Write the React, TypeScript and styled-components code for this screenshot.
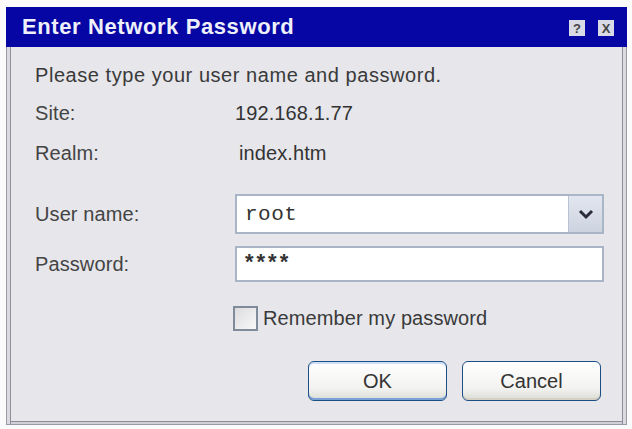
import React from 'react'
import styled, { createGlobalStyle } from 'styled-components'

const GlobalStyle = createGlobalStyle`
  html, body {
    margin: 0;
    padding: 0;
    background: #fbfbfb;
  }
  body {
    font-family: 'Liberation Sans', Arial, sans-serif;
    color: #3a3a3a;
  }
`

const Frame = styled.div`
  margin: 7px 5px 0 6px;
  width: 621px;
  display: flex;
  flex-direction: column;
`

const TitleBar = styled.div`
  height: 40px;
  background: #0606a4;
  display: flex;
  align-items: center;
  justify-content: space-between;
  padding: 0 13px 0 16px;
`

const Title = styled.span`
  color: #eef0fa;
  font-weight: bold;
  font-size: 22px;
  letter-spacing: 0.6px;
`

const Caption = styled.div`
  display: flex;
  gap: 13px;
  padding-top: 2px;
`

const CaptionButton = styled.span`
  width: 16px;
  height: 16px;
  background: #d8dae6;
  color: #444;
  font-size: 13px;
  font-weight: bold;
  display: flex;
  align-items: center;
  justify-content: center;
  line-height: 1;
`

const Body = styled.div`
  background: #e6e6eb;
  border: 1px solid #9a9aa6;
  border-top: none;
  box-shadow: inset 3px 0 0 #dadadf, inset 4px 0 0 #8e8e9c, inset -3px 0 0 #dadadf,
    inset -4px 0 0 #8e8e9c, inset 0 -2px 0 #d0d0d6, inset 0 -3px 0 #8a8a98;
  padding: 14px 22px 23px 28px;
  height: 378px;
  box-sizing: border-box;
  display: flex;
  flex-direction: column;
  font-size: 20px;
  letter-spacing: 0.1px;
`

const Prompt = styled.div`
  height: 28px;
  line-height: 28px;
  letter-spacing: 0.55px;
`

const InfoGrid = styled.div`
  display: grid;
  grid-template-columns: 200px 1fr;
  grid-auto-rows: 40px;
  align-items: center;
  margin-top: 4px;
`

const Label = styled.span`
  color: #444;
`

const Value = styled.span<{ $shift?: number }>`
  color: #333;
  margin-left: ${p => p.$shift ?? 0}px;
`

const FormGrid = styled.div`
  display: grid;
  grid-template-columns: 200px 369px;
  row-gap: 12px;
  align-items: center;
  margin-top: 21px;
`

const Field = styled.div`
  height: 36px;
  background: #fff;
  border: 2px solid #a9b6c8;
  box-sizing: border-box;
  display: flex;
  align-items: center;
  padding-left: 8px;
`

const Combo = styled(Field)`
  height: 40px;
  padding-right: 0;
`

const MonoText = styled.span`
  flex: 1;
  font-family: 'Liberation Mono', 'Courier New', monospace;
  font-size: 21px;
  color: #333;
  letter-spacing: 0.5px;
`

const Stars = styled.span`
  font-size: 22px;
  font-weight: bold;
  letter-spacing: 3px;
  color: #333;
  padding-bottom: 4px;
`

const DropButton = styled.div`
  width: 33px;
  height: 36px;
  border-left: 1px solid #b8c2d2;
  background: linear-gradient(#e2e6f0, #cdd3e0);
  display: flex;
  align-items: center;
  justify-content: center;
`

const CheckRow = styled.label`
  display: flex;
  align-items: center;
  gap: 5px;
  margin: 24px 0 0 198px;
`

const CheckBox = styled.span`
  width: 25px;
  height: 25px;
  box-sizing: border-box;
  border: 2px solid #7f8a9a;
  background: linear-gradient(135deg, #dcdce0, #f8f8f8);
`

const Buttons = styled.div`
  display: flex;
  justify-content: flex-end;
  gap: 15px;
  margin-top: auto;
  padding-right: 3px;
`

const Button = styled.button<{ $focused?: boolean }>`
  width: 139px;
  height: 40px;
  border-radius: 6px;
  border: 1px solid #1c4f86;
  background: linear-gradient(#ffffff, #f2f2f0 70%, #dcdcd6);
  box-shadow: ${p => (p.$focused ? 'inset 0 -2px 0 #7aa0d8, inset 0 2px 0 #cfe0f6' : 'inset 0 -2px 0 #d6d0c2')};
  font-family: 'Liberation Sans', Arial, sans-serif;
  font-size: 20px;
  color: #333;
  padding: 0;
`

const App = (): JSX.Element => (
  <>
    <GlobalStyle />
    <Frame>
      <TitleBar>
        <Title>Enter Network Password</Title>
        <Caption>
          <CaptionButton>?</CaptionButton>
          <CaptionButton>X</CaptionButton>
        </Caption>
      </TitleBar>
      <Body>
        <Prompt>Please type your user name and password.</Prompt>
        <InfoGrid>
          <Label>Site:</Label>
          <Value>192.168.1.77</Value>
          <Label>Realm:</Label>
          <Value $shift={4}>index.htm</Value>
        </InfoGrid>
        <FormGrid>
          <Label>User name:</Label>
          <Combo>
            <MonoText>root</MonoText>
            <DropButton>
              <svg width='16' height='12' viewBox='0 0 16 12'>
                <path d='M2 3 L8 9 L14 3' fill='none' stroke='#2a2a3a' strokeWidth='3' />
              </svg>
            </DropButton>
          </Combo>
          <Label>Password:</Label>
          <Field>
            <Stars>****</Stars>
          </Field>
        </FormGrid>
        <CheckRow>
          <CheckBox />
          <span>Remember my password</span>
        </CheckRow>
        <Buttons>
          <Button $focused>OK</Button>
          <Button>Cancel</Button>
        </Buttons>
      </Body>
    </Frame>
  </>
)

export default App
